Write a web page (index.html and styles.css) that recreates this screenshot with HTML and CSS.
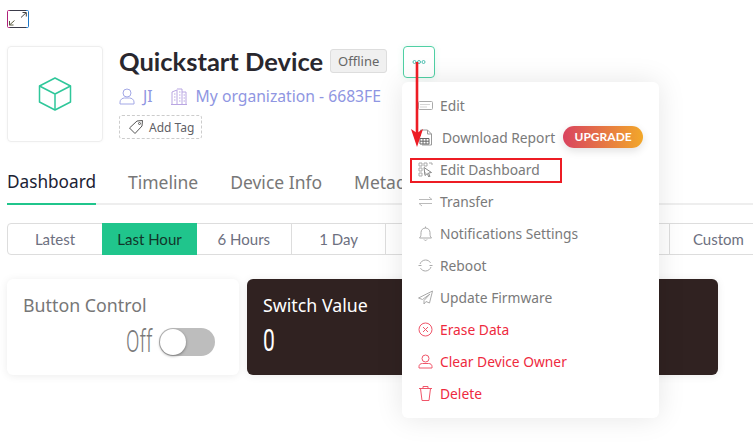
FILE: index.html
```html
<!DOCTYPE html>
<html>
    <head>
        <meta name="viewport" content="width=device-width, initial-scale=1.0">
        <title>Quickstart Device</title>
        <link rel="stylesheet" href="styles.css">
    </head>
    <body>
        <div id="page">
            <a class="expand" href="#">
                <svg width="22" height="18" viewBox="0 0 22 18" fill="none">
                    <path d="M3 17.500H1.500C0.900 17.500 0.500 17.100 0.500 16.500V1.500C0.500 0.900 0.900 0.500 1.500 0.500H3" stroke="#b0207a"/>
                    <path d="M3 0.500H19M3 17.500H19" stroke="#3b3b4a"/>
                    <path d="M19 0.500H20.500C21.100 0.500 21.500 0.900 21.500 1.500V16.500C21.500 17.100 21.100 17.500 20.500 17.500H19" stroke="#1f78c8"/>
                    <path d="M14 7.500L19 2.800M15.500 2.500H19.300V6.500" stroke="#444"/>
                    <path d="M7.500 10.500L2.500 15M2.500 11V15H6.500" stroke="#5a5a40"/>
                </svg>
            </a>

            <div class="deviceHead">
                <div class="logoBox">
                    <svg width="34" height="34" viewBox="0 0 34 34" fill="none" stroke-width="1.500" stroke-linejoin="round">
                        <path d="M17 1L32.500 9V25L17 33L1.500 25V9Z" stroke="#2fc79a"/>
                        <path d="M1.500 9L17 17L32.500 9M17 17V33" stroke="#2fc79a"/>
                    </svg>
                </div>
                <div class="deviceInfo">
                    <div class="titleRow">
                        <span class="deviceName">Quickstart Device</span>
                        <span class="status">Offline</span>
                    </div>
                    <div class="ownerRow">
                        <svg width="16" height="17" viewBox="0 0 16 17" fill="none" stroke="#a3a8e6">
                            <circle cx="8" cy="5" r="4"/>
                            <path d="M1 16V14C1 11.500 3.500 10 5.500 10H10.500C12.500 10 15 11.500 15 14V16Z"/>
                        </svg>
                        <span class="ownerName">JI</span>
                        <svg class="orgIcon" width="16" height="17" viewBox="0 0 16 17" fill="none" stroke="#b9a6e2">
                            <path d="M1 16V4L6 2V16M6 1L11 1V16M11 4H15V16M0 16.500H16M3 6H4.500M3 9H4.500M3 12H4.500M8 4H9.500M8 7H9.500M8 10H9.500M8 13H9.500M12.500 7H14M12.500 10H14M12.500 13H14"/>
                        </svg>
                        <span class="orgName">My organization - 6683FE</span>
                    </div>
                    <a class="addTag" href="#">
                        <svg width="16" height="16" viewBox="0 0 16 16" fill="none" stroke="#555">
                            <path d="M9 2L14.500 1.500L14 7L7 14.500L1.500 9Z"/>
                            <circle cx="11.500" cy="4.500" r="1"/>
                        </svg>
                        Add Tag
                    </a>
                </div>
                <a class="moreBtn" href="#">
                    <svg width="14" height="6" viewBox="0 0 14 6" fill="none" stroke="#4bbfb0">
                        <circle cx="2.500" cy="3" r="1.500"/>
                        <circle cx="7" cy="3" r="1.500"/>
                        <circle cx="11.500" cy="3" r="1.500"/>
                    </svg>
                </a>
            </div>

            <div class="tabs">
                <a class="tab active" href="#">Dashboard</a>
                <a class="tab" href="#">Timeline</a>
                <a class="tab" href="#">Device Info</a>
                <a class="tab" href="#">Metadata</a>
            </div>

            <div class="ranges">
                <a class="range first" href="#">Latest</a>
                <a class="range on" href="#">Last Hour</a>
                <a class="range" href="#">6 Hours</a>
                <a class="range" href="#">1 Day</a>
                <a class="range" href="#"></a>
                <a class="range" href="#"></a>
                <a class="range" href="#"></a>
                <a class="range last" href="#">Custom</a>
            </div>

            <div class="widgets">
                <div class="widget light">
                    <div class="widgetTitle">Button Control</div>
                    <div class="switchRow">
                        <span class="bigValue off">Off</span>
                        <span class="toggle"><span class="knob"></span></span>
                    </div>
                </div>
                <div class="widget dark">
                    <div class="widgetTitle">Switch Value</div>
                    <span class="bigValue">0</span>
                </div>
            </div>
        </div>

        <div id="menu">
            <a class="item" href="#">
                <svg width="15" height="15" viewBox="0 0 15 15" fill="none" stroke="#aaa">
                    <rect x="0.500" y="3.500" width="14" height="8" rx="1"/>
                    <path d="M2.500 6.500H12.500M2.500 9H9" stroke-dasharray="1 1"/>
                </svg>
                Edit
            </a>
            <a class="item report" href="#">
                <svg width="15" height="17" viewBox="0 0 15 17" fill="none" stroke="#999">
                    <path d="M2.500 7V1H9.500L13.500 5V16H4"/>
                    <path d="M9.500 1V5H13.500"/>
                    <path d="M2 9.500H11V15H2ZM2 12.200H11M5 9.500V15M8 9.500V15" stroke="#666"/>
                </svg>
                Download Report
                <span class="upgrade">UPGRADE</span>
            </a>
            <a class="item" href="#">
                <svg width="15" height="15" viewBox="0 0 15 15" fill="none" stroke="#aaa">
                    <path d="M1 1H4V4H1ZM6 1H9V4H6ZM11 1H14V3M1 6H4V9H1ZM1 11H4V14H1ZM6 11H8"/>
                    <path d="M6 5.500L13.500 10.500L10.500 11L12 14.500L10.800 15L9.300 11.500L7 13.500Z" stroke="#888"/>
                </svg>
                Edit Dashboard
            </a>
            <a class="item" href="#">
                <svg width="15" height="15" viewBox="0 0 15 15" fill="none" stroke="#bbb">
                    <path d="M1 5.500H14M11 3L14 5.500M14 9.500H1M4 12L1 9.500"/>
                </svg>
                Transfer
            </a>
            <a class="item" href="#">
                <svg width="15" height="15" viewBox="0 0 15 15" fill="none" stroke="#aaa">
                    <path d="M1.500 12C3 10.500 3 9 3 6.500C3 4 5 2 7.500 2C10 2 12 4 12 6.500C12 9 12 10.500 13.500 12ZM7.500 0.500V2M6 13.500C6.500 14.700 8.500 14.700 9 13.500"/>
                </svg>
                Notifications Settings
            </a>
            <a class="item" href="#">
                <svg width="15" height="15" viewBox="0 0 15 15" fill="none" stroke="#aaa">
                    <path d="M2 6C2.800 3.700 5 2 7.500 2C9.500 2 11.500 3 12.500 4.800M13 9C12.200 11.300 10 13 7.500 13C5.500 13 3.500 12 2.500 10.200"/>
                    <path d="M0.500 7.500H3.500M11.500 7.500H14.500"/>
                </svg>
                Reboot
            </a>
            <a class="item" href="#">
                <svg width="15" height="15" viewBox="0 0 15 15" fill="none" stroke="#aaa">
                    <path d="M14.500 1L0.500 8L4.500 9.500L12 4L6 10.500V14L8 11.500L11.500 13Z"/>
                </svg>
                Update Firmware
            </a>
            <a class="item danger" href="#">
                <svg width="15" height="15" viewBox="0 0 15 15" fill="none" stroke="#f0566a">
                    <circle cx="7.500" cy="7.500" r="6.500"/>
                    <path d="M5 5L10 10M10 5L5 10"/>
                </svg>
                Erase Data
            </a>
            <a class="item danger" href="#">
                <svg width="15" height="15" viewBox="0 0 15 15" fill="none" stroke="#f0566a">
                    <circle cx="7.500" cy="4.500" r="3.500"/>
                    <path d="M1 14V12.500C1 10.500 2.500 9.500 4.500 9.500H10.500C12.500 9.500 14 10.500 14 12.500V14Z"/>
                </svg>
                Clear Device Owner
            </a>
            <a class="item danger" href="#">
                <svg width="15" height="15" viewBox="0 0 15 15" fill="none" stroke="#f0566a">
                    <path d="M1 2.500H14M5 2.500V0.500H10V2.500M2.500 2.500L4 14.500H11L12.500 2.500"/>
                </svg>
                Delete
            </a>
        </div>

        <div id="markBox"></div>
        <svg id="markArrow" width="14" height="90" viewBox="0 0 14 90">
            <path d="M7 0V74" stroke="#ed1c24" stroke-width="2.600"/>
            <path d="M1 67L7 85L13 67L7 71Z" fill="#ed1c24"/>
        </svg>
    </body>
</html>
```

FILE: styles.css
```css
html,body{
    margin:0;
    height:100%;
    overflow:hidden;
    background-color:#fff;
}
body{
    font-family:"Noto Sans",sans-serif;
    position:relative;
}
a{
    text-decoration:none;
    color:inherit;
}
#page{
    padding:10px 0 0 7px;
}
.expand{
    display:block;
    width:22px;
    height:18px;
}
.expand svg{
    display:block;
}

.deviceHead{
    display:flex;
    margin-top:18px;
    height:96px;
}
.logoBox{
    width:94px;
    height:94px;
    border:1px solid #eee;
    border-radius:4px;
    display:flex;
    align-items:center;
    justify-content:center;
    box-shadow:0 0 3px rgba(0,0,0,0.04);
}
.deviceInfo{
    margin-left:16px;
    width:284px;
}
.titleRow{
    display:flex;
    align-items:center;
    margin-top:3px;
}
.deviceName{
    font-family:"Lato",sans-serif;
    font-weight:700;
    font-size:25.500px;
    line-height:24px;
    color:#29272e;
    white-space:nowrap;
}
.status{
    box-sizing:border-box;
    margin-left:7px;
    width:57px;
    height:24px;
    line-height:22px;
    text-align:center;
    font-size:13px;
    color:#666;
    background-color:#f0f0f0;
    border:1px solid #ddd;
    border-radius:3px;
}
.ownerRow{
    display:flex;
    align-items:center;
    margin-top:11px;
    height:24px;
    font-size:15.700px;
    color:#8f96e2;
    white-space:nowrap;
}
.ownerName{
    margin-left:8px;
}
.orgIcon{
    margin-left:18px;
}
.orgName{
    margin-left:9px;
}
.addTag{
    display:inline-flex;
    align-items:center;
    gap:5px;
    box-sizing:border-box;
    width:83px;
    height:24px;
    margin-top:7px;
    padding-left:8px;
    font-size:12px;
    color:#5f5f66;
    border:1px dashed #ccc;
    border-radius:3px;
}
.moreBtn{
    box-sizing:border-box;
    width:32px;
    height:32px;
    display:flex;
    align-items:center;
    justify-content:center;
    border:1px solid #4fd0a4;
    border-radius:4px;
    box-shadow:0 0 6px rgba(79,208,164,0.15);
}

.tabs{
    display:flex;
    gap:32px;
    margin-top:19px;
    height:42px;
    border-bottom:2px solid #eee;
    font-size:17.500px;
    color:#777;
    white-space:nowrap;
}
.tab{
    line-height:42px;
    height:42px;
}
.tab.active{
    font-size:17.200px;
    color:#1b2233;
    border-bottom:2px solid #20c58c;
}

.ranges{
    display:flex;
    width:770px;
    margin-top:18px;
    height:32px;
    box-sizing:border-box;
    border:1px solid #ddd;
    border-radius:4px 0 0 4px;
    font-family:"Lato",sans-serif;
    font-size:15px;
    color:#6d7080;
}
.range{
    box-sizing:border-box;
    width:94.700px;
    flex:none;
    line-height:30px;
    text-align:center;
    border-right:1px solid #ddd;
}
.range.first{
    width:94px;
    border-right:none;
}
.range.on{
    width:95px;
    background-color:#20c58c;
    color:#12352a;
    height:32px;
    margin-top:-1px;
    line-height:32px;
    border-right:none;
}
.range.last{
    border-right:none;
    width:96px;
}

.widgets{
    display:flex;
    gap:8px;
    margin-top:24px;
}
.widget{
    box-sizing:border-box;
    height:96px;
    border-radius:6px;
    padding:15px 16px;
}
.widget.light{
    width:232px;
    padding-right:24px;
    background-color:#fff;
    box-shadow:0 1px 8px rgba(0,0,0,0.08);
    color:#777;
}
.widget.dark{
    width:471px;
    background-color:#302221;
    color:#fff;
    box-shadow:0 1px 8px rgba(0,0,0,0.08);
}
.widgetTitle{
    font-size:17.800px;
    line-height:22px;
    white-space:nowrap;
}
.bigValue{
    display:block;
    width:40px;
    font-family:"Roboto",sans-serif;
    font-weight:400;
    font-size:31px;
    line-height:34px;
    margin-top:8px;
    transform:scaleX(0.68);
    transform-origin:left center;
}
.switchRow{
    display:flex;
    justify-content:flex-end;
    align-items:center;
    margin-top:9px;
}
.bigValue.off{
    margin-top:0;
    margin-right:-7px;
    font-weight:300;
    transform:scaleX(0.64);
    color:#7a7a7a;
}
.toggle{
    width:56px;
    height:28px;
    background-color:#bdbdbd;
    border-radius:14px;
    display:block;
    position:relative;
}
.knob{
    position:absolute;
    left:1px;
    top:1px;
    width:26px;
    height:26px;
    border-radius:50%;
    background-color:#fff;
    box-shadow:0 1px 3px rgba(0,0,0,0.4);
}

#menu{
    position:absolute;
    left:402px;
    top:82px;
    width:257px;
    height:336px;
    box-sizing:border-box;
    padding:8px 0;
    background-color:#fff;
    border-radius:6px;
    box-shadow:0 0 28px rgba(0,0,0,0.10);
}
.item{
    display:flex;
    align-items:center;
    gap:7px;
    box-sizing:border-box;
    height:32px;
    padding-left:16px;
    padding-bottom:2px;
    font-size:13.800px;
    color:#7a7a7a;
    white-space:nowrap;
}
.item.report{
    gap:9px;
}
.upgrade{
    width:80px;
    height:22px;
    margin-left:-1px;
    line-height:22px;
    text-align:center;
    font-family:"Lato",sans-serif;
    font-size:12px;
    font-weight:700;
    color:#fff;
    border-radius:11px;
    background-image:linear-gradient(90deg,#d9435f,#f2a82a);
    box-shadow:0 3px 8px rgba(0,0,0,0.12);
}
.item.danger{
    color:#ee2a3e;
}

#markBox{
    position:absolute;
    left:410px;
    top:158px;
    width:148px;
    height:21px;
    border:2px solid #ed1c24;
}
#markArrow{
    position:absolute;
    left:410px;
    top:62px;
}
```
